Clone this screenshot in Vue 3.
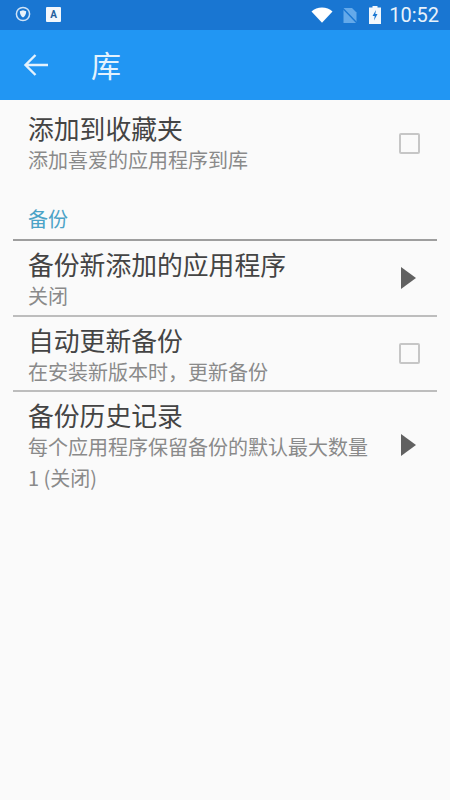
<script setup>
const rows = [
  { title: '备份新添加的应用程序', lines: ['关闭'], type: 'arrow', cls: 'first' },
  { title: '自动更新备份', lines: ['在安装新版本时，更新备份'], type: 'check', cls: '' },
  { title: '备份历史记录', lines: ['每个应用程序保留备份的默认最大数量', '1 (关闭)'], type: 'arrow', cls: 'last' }
]
</script>

<template>
  <div class="page">
    <div class="status">
      <svg class="shield" viewBox="0 0 16 16" width="16" height="16">
        <circle cx="8" cy="8" r="6.6" fill="none" stroke="#cfe3f7" stroke-width="1.5" />
        <path d="M4.8 5.2 8 4.2l3.2 1c0 3-1.2 5-3.2 6.4-2-1.4-3.2-3.4-3.2-6.4z" fill="#e8f2fb" />
      </svg>
      <div class="abadge">A</div>
      <svg class="wifi" viewBox="0 0 22 16" width="22" height="16">
        <path d="M0.5 4.5C3.3 2 6.9.6 11 .6s7.700 1.400 10.500 3.900L11 15.800z" fill="#fff" />
      </svg>
      <svg class="sim" viewBox="0 0 16 17" width="16" height="17">
        <path d="M1.500 1h8.500l4.500 4.500V16h-13z" fill="#64a9ea" />
        <path d="M1 1.500 15 16" stroke="#1976d2" stroke-width="1.400" />
      </svg>
      <svg class="battery" viewBox="0 0 12 18" width="12" height="18">
        <path d="M3.500 0h5v1.500H12V18H0V1.500h3.500z" fill="#f2f7fc" />
        <path d="M7 4 3.500 10h2.200L5 14.500 8.500 8H6.300z" fill="#1976d2" />
      </svg>
      <span class="time">10:52</span>
    </div>

    <header class="toolbar">
      <svg class="back" viewBox="0 0 26 24" width="26" height="24">
        <path d="M25 12H3M12.500 2 2.500 12l10 10" fill="none" stroke="#e3f2fd" stroke-width="2.400" />
      </svg>
      <h1 class="heading">库</h1>
    </header>

    <div class="list">
      <div class="row top">
        <div class="text">
          <div class="title">添加到收藏夹</div>
          <div class="sub">添加喜爱的应用程序到库</div>
        </div>
        <span class="check"></span>
      </div>

      <div class="section">备份</div>

      <div v-for="r in rows" :key="r.title" class="row item" :class="r.cls">
        <div class="text">
          <div class="title">{{ r.title }}</div>
          <div v-for="l in r.lines" :key="l" class="sub">{{ l }}</div>
        </div>
        <span v-if="r.type === 'check'" class="check shifted"></span>
        <span v-else class="arrow"></span>
      </div>
    </div>
  </div>
</template>

<style scoped>
.page {
  width: 450px;
  height: 800px;
  background: #fafafa;
  font-family: "Noto Sans CJK SC", "Roboto", sans-serif;
  overflow: hidden;
}
.status {
  height: 30px;
  background: #1976d2;
  display: flex;
  align-items: center;
  padding: 0 11px 0 15px;
  box-sizing: border-box;
}
.shield {
  margin-bottom: 2px;
}
.abadge {
  width: 15px;
  height: 15px;
  margin: 0 0 2px 15px;
  background: #f2f7fc;
  border-radius: 1px;
  color: #1f5f9e;
  font: 700 10px/15px "Roboto", sans-serif;
  text-align: center;
}
.wifi {
  margin-left: auto;
}
.sim {
  margin-left: 9px;
}
.battery {
  margin-left: 11px;
}
.time {
  margin-left: 8px;
  color: #e8f2fb;
  font: 400 20px/30px "Roboto", sans-serif;
}
.toolbar {
  height: 70px;
  background: #2196f3;
  display: flex;
  align-items: center;
  padding-left: 23px;
  box-sizing: border-box;
}
.heading {
  margin: 0 0 2px 42px;
  font-size: 30px;
  font-weight: 400;
  line-height: 68px;
  color: #e3f2fd;
}
.list {
  margin: 0 13px;
}
.row {
  display: flex;
  align-items: center;
  padding: 0 17px 3px 15px;
}
.top {
  padding-top: 12px;
  padding-bottom: 0;
}
.item {
  padding-top: 7px;
  border-top: 2px solid #bdbdbd;
}
.first {
  padding-bottom: 4px;
  border-top-color: #9e9e9e;
}
.last {
  padding-bottom: 0;
}
.text {
  flex: 1;
  min-width: 0;
}
.title {
  font-size: 25.8px;
  line-height: 32px;
  color: #444;
}
.sub {
  font-size: 20px;
  line-height: 31px;
  color: #8a8a8a;
}
.check {
  width: 17px;
  height: 17px;
  border: 2px solid #c6c6c6;
  border-radius: 2px;
}
.shifted {
  margin-bottom: 5px;
}
.arrow {
  width: 0;
  height: 0;
  border-left: 15px solid #616161;
  border-top: 11px solid transparent;
  border-bottom: 11px solid transparent;
  margin: 0 4px 3px 0;
}
.section {
  margin: 29px 0 0 15px;
  height: 35px;
  font-size: 20px;
  line-height: 30px;
  color: #4ba3c7;
}
</style>
